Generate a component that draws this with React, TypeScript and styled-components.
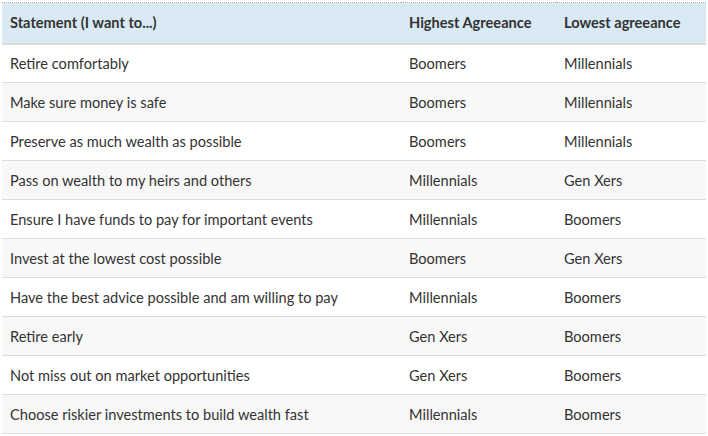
import React from "react";
import styled, { createGlobalStyle } from "styled-components";

const Global = createGlobalStyle`
  html, body { margin: 0; padding: 0; background: #fff; }
  body { font-family: "Lato", "Liberation Sans", sans-serif; }
`;

const Wrap = styled.div`
  padding: 2px 2px 0 2px;
`;

const Table = styled.table`
  width: 704px;
  border-collapse: collapse;
  border-top: 1px dotted #aaa;
  font-size: 14.6px;
  color: #333;
  table-layout: fixed;
`;

const HeadCell = styled.th<{ $w?: number }>`
  ${(p) => (p.$w ? `width: ${p.$w}px;` : "")}
  background: #d9eaf4;
  text-align: left;
  font-weight: 700;
  height: 41px;
  padding: 0 8px;
  border-bottom: 2px solid #dcdcdc;
  box-sizing: border-box;
`;

const Row = styled.tr<{ $alt: boolean }>`
  background: ${(p) => (p.$alt ? "#f8f8f8" : "#fff")};
  border-bottom: 1px solid #dcdcdc;
`;

const Cell = styled.td`
  height: 39px;
  padding: 0 8px;
  vertical-align: middle;
  box-sizing: border-box;
`;

const rows: [string, string, string][] = [
  ["Retire comfortably", "Boomers", "Millennials"],
  ["Make sure money is safe", "Boomers", "Millennials"],
  ["Preserve as much wealth as possible", "Boomers", "Millennials"],
  ["Pass on wealth to my heirs and others", "Millennials", "Gen Xers"],
  ["Ensure I have funds to pay for important events", "Millennials", "Boomers"],
  ["Invest at the lowest cost possible", "Boomers", "Gen Xers"],
  ["Have the best advice possible and am willing to pay", "Millennials", "Boomers"],
  ["Retire early", "Gen Xers", "Boomers"],
  ["Not miss out on market opportunities", "Gen Xers", "Boomers"],
  ["Choose riskier investments to build wealth fast", "Millennials", "Boomers"],
];

export default function App() {
  return (
    <>
      <Global />
      <Wrap>
        <Table>
          <thead>
            <tr>
              <HeadCell $w={399}>Statement (I want to...)</HeadCell>
              <HeadCell $w={155}>Highest Agreeance</HeadCell>
              <HeadCell>Lowest agreeance</HeadCell>
            </tr>
          </thead>
          <tbody>
            {rows.map((r, i) => (
              <Row key={i} $alt={i % 2 === 1}>
                <Cell>{r[0]}</Cell>
                <Cell>{r[1]}</Cell>
                <Cell>{r[2]}</Cell>
              </Row>
            ))}
          </tbody>
        </Table>
      </Wrap>
    </>
  );
}
